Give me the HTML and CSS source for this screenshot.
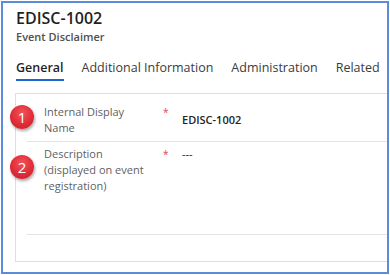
FILE: index.html
```html
<!DOCTYPE html>
<html lang="en">
<head>
  <meta charset="UTF-8" />
  <title>EDISC-1002 - Event Disclaimer</title>
  <link rel="stylesheet" href="styles.css">
</head>
<body>
  <div class="frame">
    <header class="head">
      <h1 class="title">EDISC-1002</h1>
      <div class="entity">Event Disclaimer</div>
    </header>

    <nav class="tabs">
      <span class="tab active">General</span>
      <span class="tab">Additional Information</span>
      <span class="tab">Administration</span>
      <span class="tab">Related</span>
    </nav>

    <section class="card">
      <div class="row first">
        <span class="badge">1</span>
        <div class="label">Internal Display<br>Name</div>
        <span class="req">*</span>
        <div class="value strong">EDISC-1002</div>
      </div>
      <div class="row second">
        <span class="badge">2</span>
        <div class="label">Description<br>(displayed on event<br>registration)</div>
        <span class="req">*</span>
        <div class="value">---</div>
      </div>
    </section>
  </div>
</body>
</html>
```

FILE: styles.css
```css
* {
  box-sizing: border-box;
}

body {
  margin: 0;
  padding: 1px;
  background: #ffffff;
  font-family: "Open Sans", "Noto Sans", sans-serif;
  color: #242424;
}

.frame {
  width: 388px;
  height: 273px;
  border: 2px solid #5b8bd9;
  padding-left: 13px;
  overflow: hidden;
}

.head {
  padding-top: 6px;
}

.title {
  margin: 0;
  font-size: 16px;
  line-height: 18px;
  font-weight: 600;
  color: #1f1f1f;
}

.entity {
  margin-top: 3px;
  font-size: 11px;
  line-height: 14px;
  font-weight: 600;
  color: #505050;
}

.tabs {
  display: flex;
  gap: 18px;
  margin-top: 15px;
}

.tab {
  font-size: 12.5px;
  line-height: 18px;
  color: #3b3b3b;
  padding-bottom: 2px;
  border-bottom: 2px solid transparent;
}

.tab.active {
  font-weight: 600;
  color: #1f1f1f;
  border-bottom-color: #1a66d2;
}

.card {
  margin-top: 12px;
  margin-left: -1px;
  width: 400px;
  height: 169px;
  border: 1px solid #dedede;
}

.row {
  position: relative;
  display: flex;
  margin-left: 11px;
  padding-left: 17px;
  border-bottom: 1px solid #e3e3e3;
  font-size: 11px;
  line-height: 16px;
}

.row.first {
  height: 48px;
  padding-top: 10px;
}

.row.second {
  height: 93px;
  padding-top: 4px;
}

.label {
  width: 119px;
  color: #5f5f5f;
}

.req {
  width: 19px;
  color: #e0474f;
  font-size: 10px;
}

.value {
  color: #242424;
}

.value.strong {
  font-weight: 600;
  margin-top: 8px;
}

.badge {
  position: absolute;
  left: -17px;
  width: 24px;
  height: 24px;
  border-radius: 50%;
  background: radial-gradient(circle at 50% 35%, #f3535c 0%, #e02c36 55%, #c01f28 100%);
  box-shadow: 1px 2px 3px rgba(0, 0, 0, 0.35);
  color: #ffffff;
  font-size: 15px;
  line-height: 24px;
  text-align: center;
}

.row.first .badge { top: 11px; }
.row.second .badge { top: 13px; }
```
